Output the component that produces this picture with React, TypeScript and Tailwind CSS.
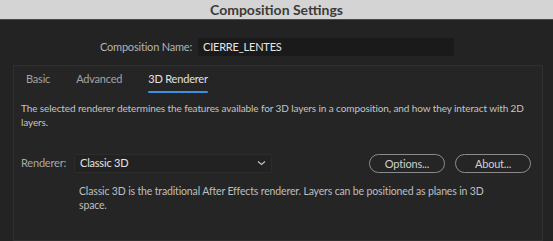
import React from "react";

const font = { fontFamily: "Lato, 'Liberation Sans', sans-serif" };

const TitleBar: React.FC = () => (
  <div className="h-[20px] shrink-0 bg-[#d4d4d4] border-b border-[#4a4a4a] flex items-center justify-center">
    <span className="text-[14px] font-bold text-[#3b3b3b] leading-none">Composition Settings</span>
  </div>
);

const PillButton: React.FC<{ text: string }> = ({ text }) => (
  <button className="w-[76px] h-[19px] rounded-full border-[1.5px] border-[#8c8c8c] text-[11px] tracking-[-0.2px] text-[#cfcfcf] leading-none flex items-center justify-center">
    {text}
  </button>
);

const App: React.FC = () => {
  return (
    <div className="w-[553px] h-[241px] bg-[#232323] flex flex-col overflow-hidden" style={font}>
      <TitleBar />

      {/* Nombre de la composición */}
      <div className="flex items-center mt-[18px] h-[18px]">
        <div className="w-[192px] text-right text-[11px] tracking-[-0.2px] text-[#b3b3b3]">Composition Name:</div>
        <div className="ml-[6px] w-[256px] h-[18px] bg-[#1a1a1a] rounded-[2px] flex items-center px-[5px] text-[11px] tracking-[-0.2px] text-[#e6e6e6]">
          CIERRE_LENTES
        </div>
      </div>

      {/* Panel */}
      <div className="mt-[9px] mx-[13px] mr-[10px] flex-1 border border-[#2f2f2f] bg-[#252525]">
        {/* Pestañas */}
        <div className="flex gap-[26px] pl-[12px] pt-[4px] text-[11px] tracking-[-0.2px]">
          <div className="text-[#a3a3a3] pt-[1px]">Basic</div>
          <div className="text-[#a3a3a3] pt-[1px]">Advanced</div>
          <div className="flex flex-col items-stretch">
            <span className="text-[#e2e2e2] pt-[1px]">3D Renderer</span>
            <span className="h-[2px] mt-[3px] bg-[#3d8fe0] rounded-full" />
          </div>
        </div>

        <p className="mt-[8px] pl-[7px] pr-[8px] text-[10px] tracking-[-0.1px] leading-[14px] text-[#c4c4c4]">
          The selected renderer determines the features available for 3D layers in a composition, and how they interact with 2D
          layers.
        </p>

        {/* Fila del renderizador */}
        <div className="mt-[25px] flex items-center pl-[7px]">
          <span className="w-[53px] text-[11px] tracking-[-0.2px] text-[#a8a8a8]">Renderer:</span>
          <div className="w-[198px] h-[19px] bg-[#222222] border border-[#2c2c2c] rounded-[2px] flex items-center justify-between pl-[5px] pr-[5px]">
            <span className="text-[11px] tracking-[-0.2px] text-[#e4e4e4]">Classic 3D</span>
            <svg width="9" height="6" viewBox="0 0 9 6" fill="none">
              <path d="M1 1.5 L4.5 4.5 L8 1.5" stroke="#bdbdbd" strokeWidth="1.3" />
            </svg>
          </div>
          <div className="ml-[97px] flex gap-[10px]">
            <PillButton text="Options..." />
            <PillButton text="About..." />
          </div>
        </div>

        <p className="mt-[11px] pl-[65px] pr-[30px] text-[10.5px] tracking-[-0.15px] leading-[14px] text-[#bfbfbf]">
          Classic 3D is the traditional After Effects renderer. Layers can be positioned as planes in 3D space.
        </p>
      </div>
    </div>
  );
};

export default App;
